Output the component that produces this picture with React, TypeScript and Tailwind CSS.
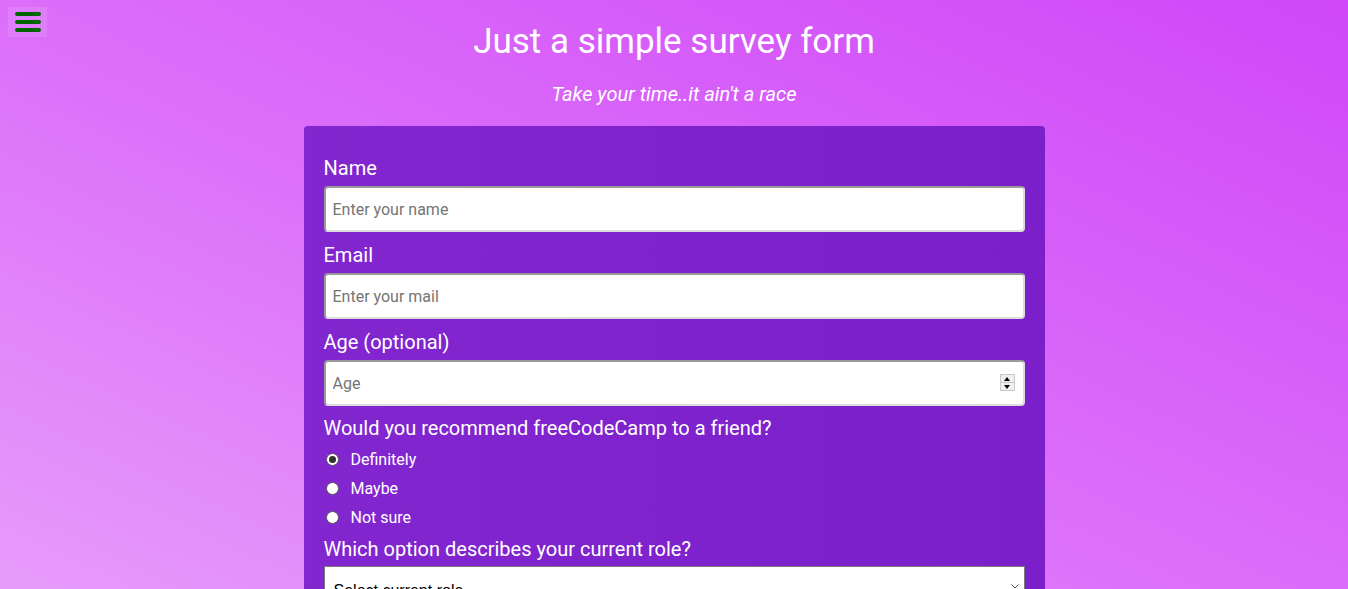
import { useState } from "react";

const roles = ["Student", "Full time job", "Full time learner", "Prefer not to say", "Other"];
const answers = ["Definitely", "Maybe", "Not sure"];

export default function App() {
  const [picked, setPicked] = useState("Definitely");

  return (
    <div className="relative min-h-[589px] overflow-hidden bg-[linear-gradient(to_top_right,#e79ffa_0%,#dd72fa_45%,#cf47f8_100%)] font-['Roboto',sans-serif] text-white">
      <button type="button" className="absolute left-[8px] top-[7px] flex h-[30px] w-[39px] flex-col items-center justify-center gap-[4px] bg-white/10">
        <span className="block h-[4px] w-[26px] rounded-full bg-[#006400]" />
        <span className="block h-[4px] w-[26px] rounded-full bg-[#006400]" />
        <span className="block h-[4px] w-[26px] rounded-full bg-[#006400]" />
      </button>

      <header className="pt-[21px] text-center">
        <h1 className="text-[35px] leading-[42px] font-normal">Just a simple survey form</h1>
        <p className="mt-[19px] text-[20px] leading-[24px] italic">Take your time..it ain't a race</p>
      </header>

      <form className="mx-auto mt-[20px] w-[741px] rounded-[4px] bg-[linear-gradient(to_right,#8226d0,#7b1fca)] px-[20px] pt-[30px] pb-[20px]">
        <Field label="Name" placeholder="Enter your name" />
        <Field label="Email" placeholder="Enter your mail" />
        <Field label="Age (optional)" placeholder="Age" spinner />

        <p className="-mt-[1px] text-[20px] leading-[24px]">Would you recommend freeCodeCamp to a friend?</p>
        <div className="mt-[5px]">
          {answers.map((answer) => (
            <label key={answer} className="flex h-[29px] cursor-pointer items-center text-[16px]" onClick={() => setPicked(answer)}>
              <span className="ml-[2px] flex h-[13px] w-[13px] items-center justify-center rounded-full border border-[#555] bg-white">
                {picked === answer && <span className="h-[7px] w-[7px] rounded-full bg-[#333]" />}
              </span>
              <span className="ml-[12px]">{answer}</span>
            </label>
          ))}
        </div>

        <p className="mt-[5px] text-[20px] leading-[24px]">Which option describes your current role?</p>
        <div className="relative mt-[5px]">
          <select className="h-[44px] w-full appearance-none border border-[#7a7a7a] bg-white px-[9px] pt-[6px] font-['Liberation_Sans',sans-serif] text-[16px] text-black outline-none">
            <option>Select current role</option>
            {roles.map((role) => <option key={role}>{role}</option>)}
          </select>
          <svg className="pointer-events-none absolute right-[5px] top-[16px] h-[8px] w-[10px]" viewBox="0 0 10 8" fill="none" stroke="#555" strokeWidth="1">
            <path d="M1.5 2.5 5 6 8.5 2.5" />
          </svg>
        </div>
      </form>
    </div>
  );
}

function Field({ label, placeholder, spinner }: { label: string; placeholder: string; spinner?: boolean }) {
  return (
    <label className="mb-[11px] block">
      <span className="block text-[20px] leading-[24px]">{label}</span>
      <span className="relative mt-[6px] block">
        <input
          className="block h-[46px] w-full rounded-[4px] border-2 border-t-[#9a9a9a] border-l-[#9a9a9a] border-r-[#dcdcdc] border-b-[#dcdcdc] bg-white px-[7px] text-[16px] text-black outline-none placeholder:text-[#757575]"
          placeholder={placeholder}
        />
        {spinner && (
          <span className="absolute right-[10px] top-[14px] flex h-[17px] w-[15px] flex-col border border-[#c8c8c8] bg-[#efefef]">
            <span className="flex flex-1 items-center justify-center border-b border-[#c8c8c8]">
              <span className="h-0 w-0 border-x-[3px] border-b-[4px] border-x-transparent border-b-black" />
            </span>
            <span className="flex flex-1 items-center justify-center">
              <span className="h-0 w-0 border-x-[3px] border-t-[4px] border-x-transparent border-t-black" />
            </span>
          </span>
        )}
      </span>
    </label>
  );
}
